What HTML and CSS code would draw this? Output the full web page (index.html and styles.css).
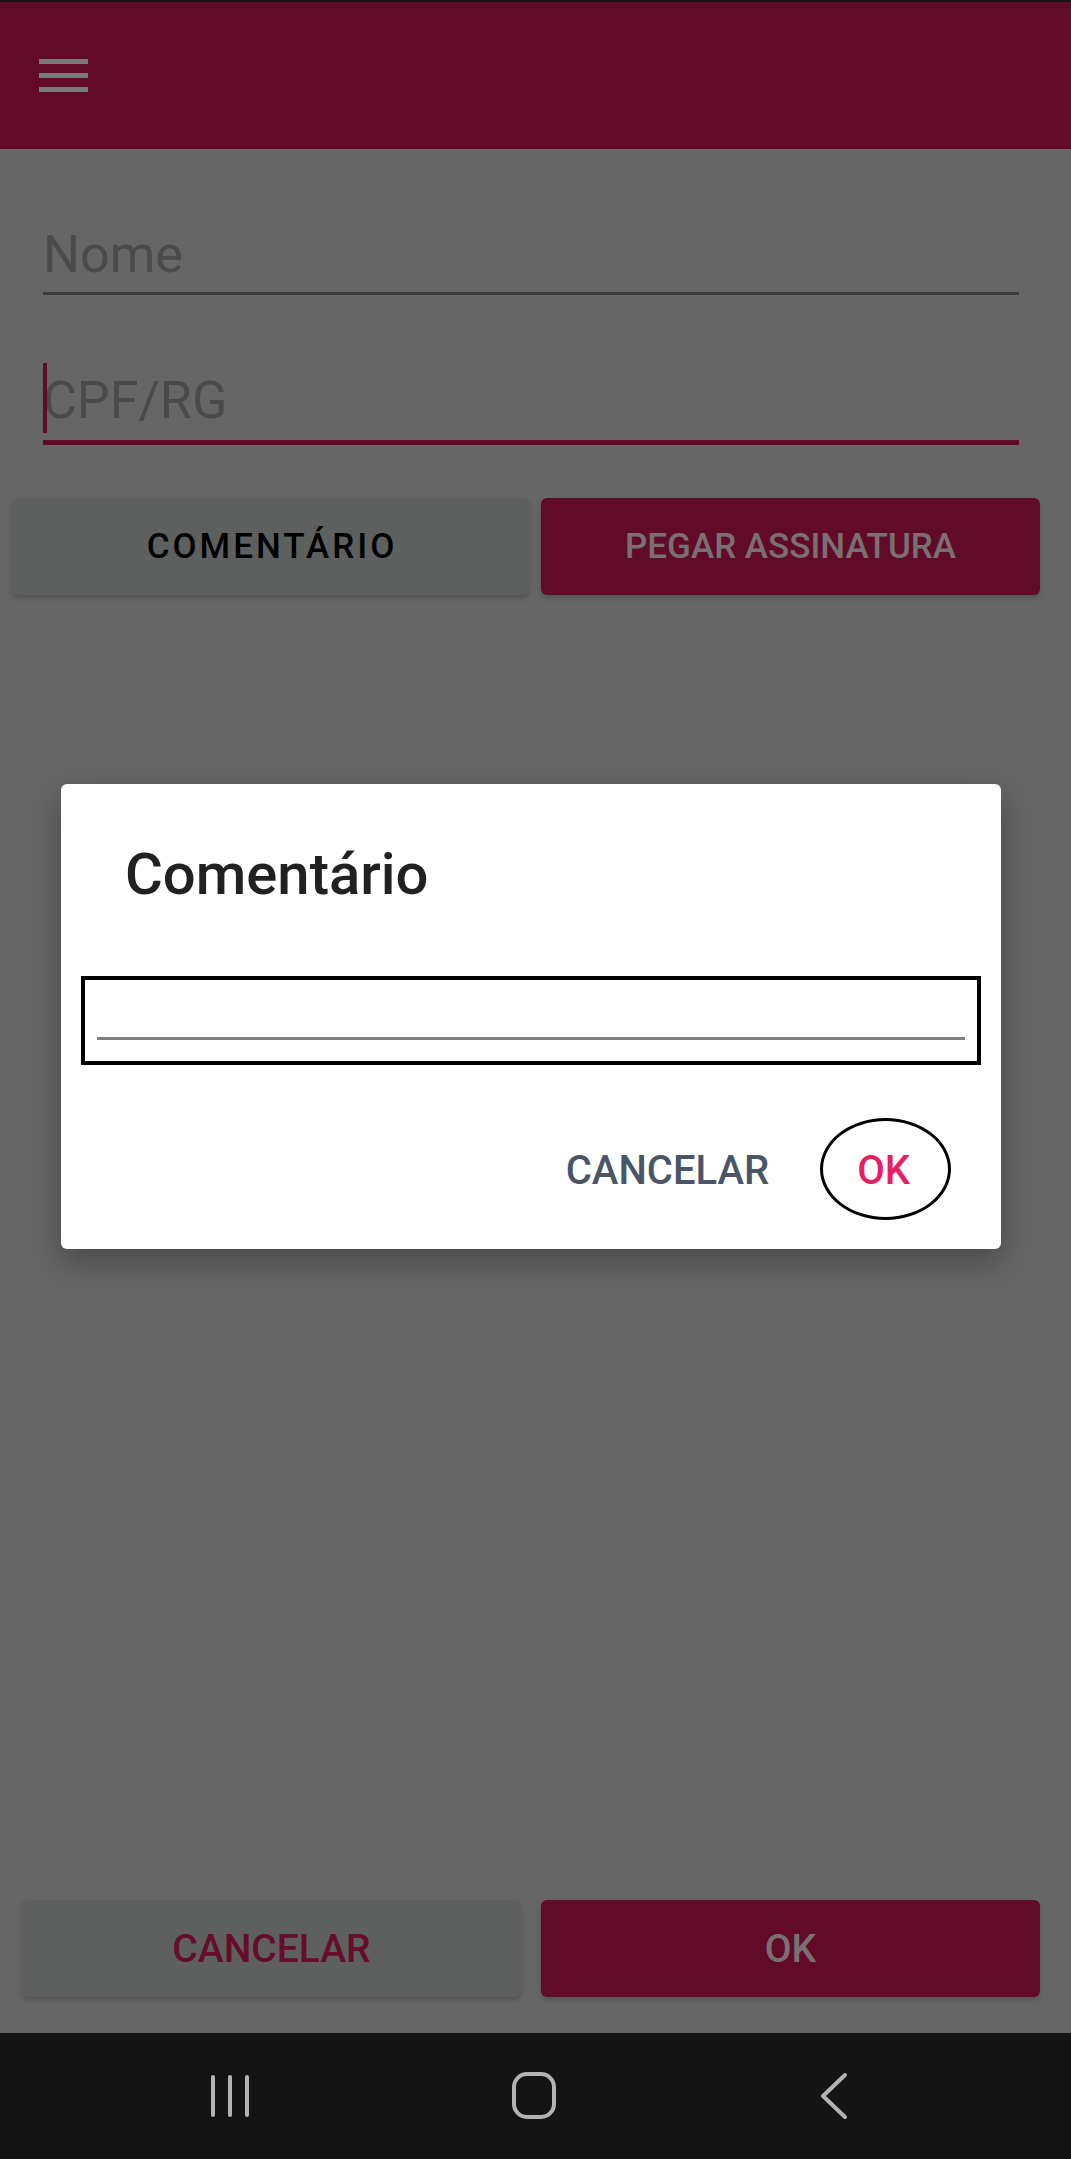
FILE: index.html
```html
<!DOCTYPE html>
<html lang="pt-BR">
<head>
<meta charset="utf-8">
<title>Comentário</title>
<link rel="stylesheet" href="styles.css">
</head>
<body>
<div class="app">
  <div class="status"></div>
  <header class="topbar">
    <div class="hamburger"><span></span><span></span><span></span></div>
  </header>
  <main class="content">
    <div class="field field-name"><span class="ph">Nome</span></div>
    <div class="field field-doc focused"><span class="caret"></span><span class="ph">CPF/RG</span></div>
    <div class="row row-top">
      <button class="btn btn-light btn-wide spaced">COMENTÁRIO</button>
      <button class="btn btn-primary">PEGAR ASSINATURA</button>
    </div>
    <div class="spacer"></div>
    <div class="row row-bottom">
      <button class="btn btn-light pink-text">CANCELAR</button>
      <button class="btn btn-primary big">OK</button>
    </div>
  </main>
  <nav class="navbar">
    <svg class="nav-icon" width="44" height="46" viewBox="0 0 44 46"><g stroke="#b3b3b3" stroke-width="4" stroke-linecap="round"><line x1="4" y1="4" x2="4" y2="42"/><line x1="21" y1="4" x2="21" y2="42"/><line x1="38" y1="4" x2="38" y2="42"/></g></svg>
    <svg class="nav-icon" width="48" height="50" viewBox="0 0 48 50"><rect x="4" y="3" width="40" height="43" rx="13" fill="none" stroke="#b3b3b3" stroke-width="4"/></svg>
    <svg class="nav-icon" width="30" height="48" viewBox="0 0 30 48"><polyline points="26,3 4,24 26,45" fill="none" stroke="#b3b3b3" stroke-width="4" stroke-linecap="round" stroke-linejoin="round"/></svg>
  </nav>
</div>

<div class="dialog">
  <h2 class="dialog-title">Comentário</h2>
  <div class="dialog-input"><div class="dialog-line"></div></div>
  <div class="dialog-actions">
    <button class="text-btn cancel">CANCELAR</button>
    <button class="text-btn ok">OK<span class="ring"></span></button>
  </div>
</div>
</body>
</html>
```

FILE: styles.css
```css
* { box-sizing: border-box; }
html, body { margin: 0; padding: 0; }
body {
  width: 1071px;
  height: 2159px;
  background: #666666;
  font-family: Roboto, "Noto Sans", Arial, sans-serif;
  position: relative;
  overflow: hidden;
}
.app {
  display: flex;
  flex-direction: column;
  height: 2159px;
}
.status { height: 2px; background: #1e1118; }
.topbar {
  height: 147px;
  background: #620b29;
  display: flex;
  align-items: center;
  padding-left: 39px;
}
.hamburger { display: flex; flex-direction: column; gap: 9px; }
.hamburger span { display: block; width: 49px; height: 5px; background: #7b7b7b; }

.content {
  flex: 1;
  display: flex;
  flex-direction: column;
}
.field {
  margin-left: 43px;
  width: 976px;
  font-size: 52px;
  line-height: 56px;
  color: #4a4a4a;
  padding-bottom: 9px;
  position: relative;
  display: flex;
  align-items: center;
}
.field-name { margin-top: 78px; border-bottom: 3px solid #3b3b3b; }
.field-doc { margin-top: 78px; padding-bottom: 11px; border-bottom: 5px solid #620b29; }
.ph { display: block; }
.caret {
  position: absolute;
  left: 0;
  top: -10px;
  width: 4px;
  height: 70px;
  background: #620b29;
}
.row { display: flex; }
.row-top { margin-top: 53px; padding-left: 12px; gap: 12px; }
.row-bottom { padding-left: 22px; gap: 20px; margin-bottom: 36px; }
.spacer { flex: 1; }
.btn {
  width: 499px;
  height: 97px;
  border: none;
  border-radius: 6px;
  font-family: Roboto, Arial, sans-serif;
  font-weight: 500;
  font-size: 35px;
  box-shadow: 0 3px 5px rgba(0, 0, 0, 0.18);
  padding: 0;
}
.btn-wide { width: 517px; }
.btn-light { background: #5e605f; color: #000; }
.btn-primary { background: #620b29; color: #7a7074; }
.spaced { letter-spacing: 3px; font-size: 35px; padding-left: 3px; }
.pink-text { color: #650d2b; font-size: 39px; }
.big { font-size: 39px; }

.navbar {
  height: 126px;
  background: #141414;
  display: flex;
  align-items: center;
}
.nav-icon { display: block; }
.navbar .nav-icon:nth-child(1) { margin-left: 209px; }
.navbar .nav-icon:nth-child(2) { margin-left: 257px; }
.navbar .nav-icon:nth-child(3) { margin-left: 261px; }

.dialog {
  position: absolute;
  left: 61px;
  top: 784px;
  width: 940px;
  height: 465px;
  background: #ffffff;
  border-radius: 6px;
  box-shadow: 0 12px 30px rgba(0, 0, 0, 0.3);
  padding: 58px 20px 0 20px;
  display: flex;
  flex-direction: column;
}
.dialog-title {
  margin: 0 0 0 44px;
  font-size: 58px;
  font-weight: 500;
  line-height: 64px;
  color: #212121;
}
.dialog-input {
  margin-top: 70px;
  height: 89px;
  border: 4px solid #000;
  padding: 57px 12px 0 12px;
}
.dialog-line { height: 3px; background: #808080; }
.dialog-actions {
  margin-top: 82px;
  display: flex;
  justify-content: flex-end;
  align-items: center;
  gap: 88px;
  padding-right: 71px;
}
.text-btn {
  background: none;
  border: none;
  padding: 0;
  font-family: Roboto, Arial, sans-serif;
  font-weight: 500;
  font-size: 40px;
  line-height: 48px;
  position: relative;
}
.cancel { color: #4a5568; }
.ok { color: #e91e63; }
.ring {
  position: absolute;
  left: -37px;
  top: -29px;
  width: 131px;
  height: 102px;
  border: 3px solid #000;
  border-radius: 50%;
}
```
